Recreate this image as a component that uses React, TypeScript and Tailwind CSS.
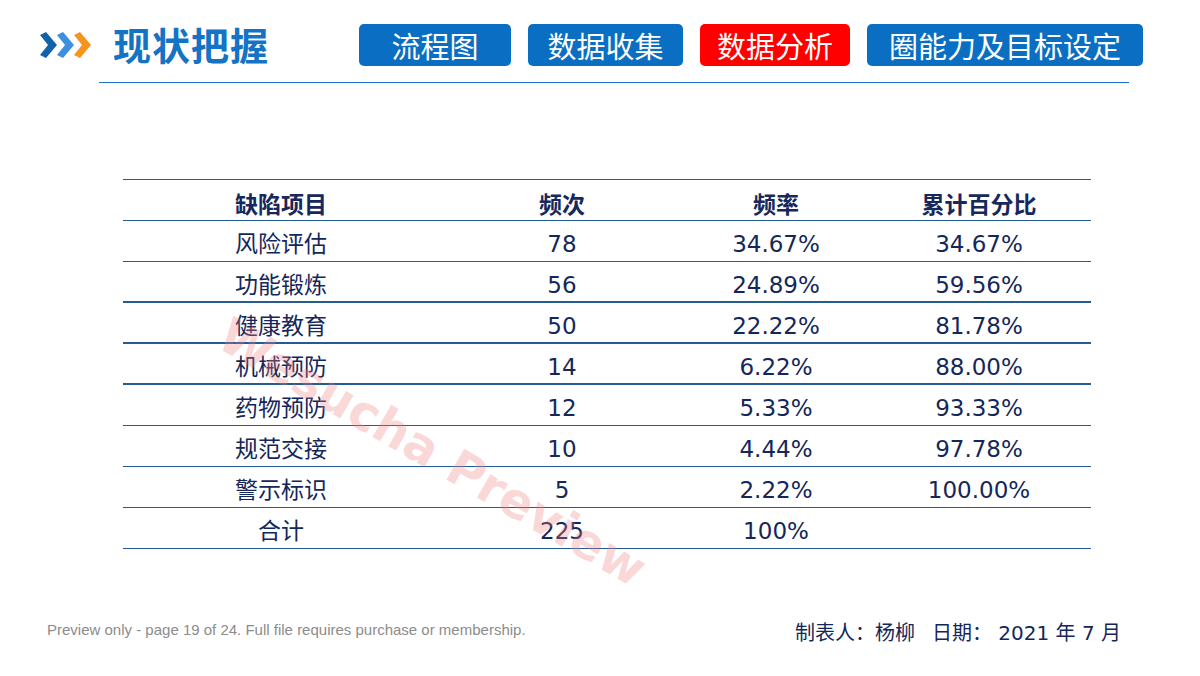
const rows = [
  ["风险评估", "78", "34.67%", "34.67%", false],
  ["功能锻炼", "56", "24.89%", "59.56%", true],
  ["健康教育", "50", "22.22%", "81.78%", true],
  ["机械预防", "14", "6.22%", "88.00%", true],
  ["药物预防", "12", "5.33%", "93.33%", false],
  ["规范交接", "10", "4.44%", "97.78%", false],
  ["警示标识", "5", "2.22%", "100.00%", false],
  ["合计", "225", "100%", "", false],
] as const;

const Arrows = () => (
  <svg width="54" height="26" viewBox="0 0 54 26">
    <path d="M0 3 L6 0 L17 13 L6 26 L0 23 L8 13 Z" fill="#1262ab" />
    <path d="M17 3 L23 0 L34 13 L23 26 L17 23 L25 13 Z" fill="#3d8fe0" />
    <path d="M34 3 L40 0 L51 13 L40 26 L34 23 L42 13 Z" fill="#f7941d" />
  </svg>
);

const Tab = ({ label, red, w }: { label: string; red?: boolean; w: string }) => (
  <div
    className={`${w} h-[42px] rounded-[5px] flex items-center justify-center text-white text-[29px] leading-none ${
      red ? "bg-[#ff0000]" : "bg-[#0a6fc2]"
    }`}
  >
    {label}
  </div>
);

const cell = "flex justify-center";

export default function App() {
  return (
    <div
      className="relative w-[1200px] h-[676px] bg-white overflow-hidden"
      style={{ fontFamily: '"DejaVu Sans", "Noto Sans CJK SC", sans-serif' }}
    >
      {/* header */}
      <div className="flex items-center pl-[40px] pt-[22px]">
        <div className="w-[73px] pt-[2px]">
          <Arrows />
        </div>
        <div className="text-[38px] font-bold text-[#1473c5] leading-none tracking-[1px] w-[246px]" style={{ fontFamily: '"Noto Sans CJK SC", sans-serif' }}>
          现状把握
        </div>
        <div className="flex gap-[17px] pt-[2px]" style={{ fontFamily: '"Noto Sans CJK SC", sans-serif' }}>
          <Tab label="流程图" w="w-[152px]" />
          <Tab label="数据收集" w="w-[155px]" />
          <Tab label="数据分析" w="w-[150px]" red />
          <Tab label="圈能力及目标设定" w="w-[276px]" />
        </div>
      </div>
      <div className="ml-[99px] mt-[16px] w-[1030px] h-px bg-[#1a73c4]" />

      {/* table */}
      <div className="ml-[123px] mt-[96px] w-[968px] border-t border-[#245c92] text-[#14275a]">
        <div className="grid grid-cols-[316px_246px_182px_224px] h-[41px] border-b border-[#245c92] pt-[12px] text-[23px] font-bold leading-[26px] text-[#16285c]">
          <div className={cell}>缺陷项目</div>
          <div className={cell}>频次</div>
          <div className={cell}>频率</div>
          <div className={cell}>累计百分比</div>
        </div>
        {rows.map(([a, b, c, d, thick]) => (
          <div
            key={a}
            className={`grid grid-cols-[316px_246px_182px_224px] h-[41px] ${
              thick ? "border-b-2" : "border-b"
            } border-[#245c92] pt-[10px] text-[23px] leading-[26px]`}
          >
            <div className={cell}>{a}</div>
            <div className={cell}>{b}</div>
            <div className={cell}>{c}</div>
            <div className={cell}>{d}</div>
          </div>
        ))}
      </div>

      {/* watermark */}
      <div
        className="absolute left-[190px] top-[428px] text-[49px] font-bold text-[#f08080] opacity-30 rotate-[30deg] whitespace-nowrap leading-none pointer-events-none"
        style={{ fontFamily: '"DejaVu Sans", sans-serif' }}
      >
        Wesucha Preview
      </div>

      {/* footer */}
      <div className="absolute left-0 right-0 bottom-[28px] flex items-end justify-between pl-[47px] pr-[79px]">
        <div className="text-[15px] text-[#8c8c8c] mb-[7px]" style={{ fontFamily: '"Liberation Sans", sans-serif' }}>
          Preview only - page 19 of 24. Full file requires purchase or membership.
        </div>
        <div className="flex text-[20px] text-[#14275a] whitespace-pre">
          <span>制表人：杨柳</span>
          <span className="ml-[17px]">日期： 2021 年 7 月</span>
        </div>
      </div>
    </div>
  );
}
